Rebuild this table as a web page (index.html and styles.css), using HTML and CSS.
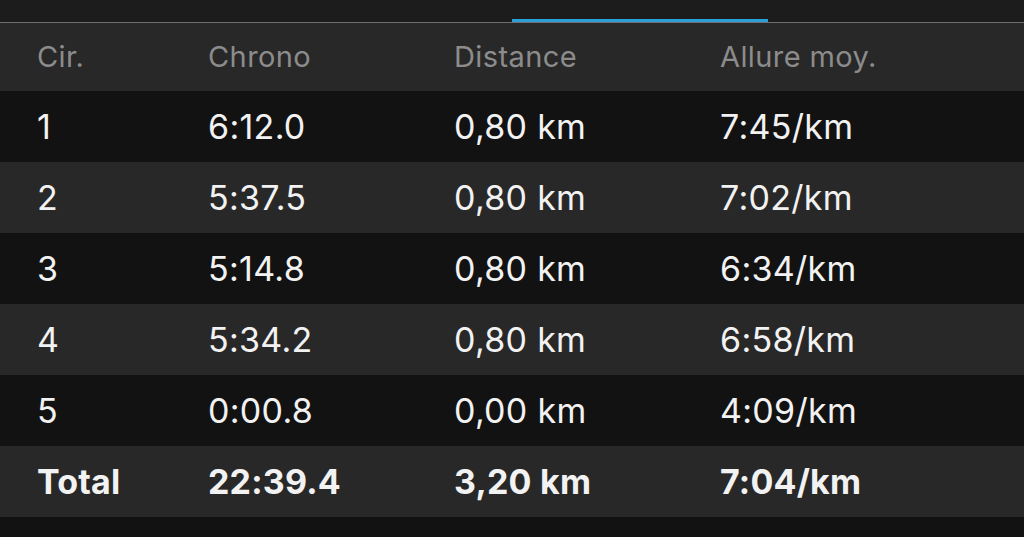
FILE: index.html
```html
<!DOCTYPE html>
<html lang="fr">
<head>
    <meta charset="UTF-8">
    <title>Circuits</title>
    <link rel="stylesheet" href="styles.css">
</head>
<body>
    <div class="tabs">
        <div class="tab"></div>
        <div class="tab"></div>
        <div class="tab active"></div>
        <div class="tab"></div>
    </div>
    <div class="laps">
        <div class="row head">
            <span>Cir.</span><span>Chrono</span><span>Distance</span><span>Allure moy.</span>
        </div>
        <div class="row">
            <span>1</span><span>6:12.0</span><span>0,80 km</span><span>7:45/km</span>
        </div>
        <div class="row">
            <span>2</span><span>5:37.5</span><span>0,80 km</span><span>7:02/km</span>
        </div>
        <div class="row">
            <span>3</span><span>5:14.8</span><span>0,80 km</span><span>6:34/km</span>
        </div>
        <div class="row">
            <span>4</span><span>5:34.2</span><span>0,80 km</span><span>6:58/km</span>
        </div>
        <div class="row">
            <span>5</span><span>0:00.8</span><span>0,00 km</span><span>4:09/km</span>
        </div>
        <div class="row total">
            <span>Total</span><span>22:39.4</span><span>3,20 km</span><span>7:04/km</span>
        </div>
    </div>
</body>
</html>
```

FILE: styles.css
```css
body {
    margin: 0;
    background-color: #121212;
    font-family: Inter, "Noto Sans", sans-serif;
    overflow: hidden;
}

.tabs {
    display: flex;
    height: 22px;
    background: #1c1c1c;
    border-bottom: 1px solid #6e6e6e;
}

.tab {
    flex: 1;
}

.tab.active {
    align-self: flex-end;
    height: 3px;
    background: #2b9fd9;
}

.row {
    display: grid;
    grid-template-columns: 171px 246px 266px 1fr;
    align-items: center;
    height: 71px;
    padding-left: 37px;
    font-size: 34px;
    letter-spacing: 0.3px;
    color: #f2f2f2;
    background: #121212;
}

.row:nth-child(odd) {
    background: #282828;
}

.row.head {
    height: 68px;
    font-size: 29px;
    letter-spacing: 0.4px;
    color: #8c8c8c;
    padding-bottom: 2px;
    box-sizing: border-box;
}

.row.total {
    font-weight: 700;
    letter-spacing: 0.2px;
}
```
